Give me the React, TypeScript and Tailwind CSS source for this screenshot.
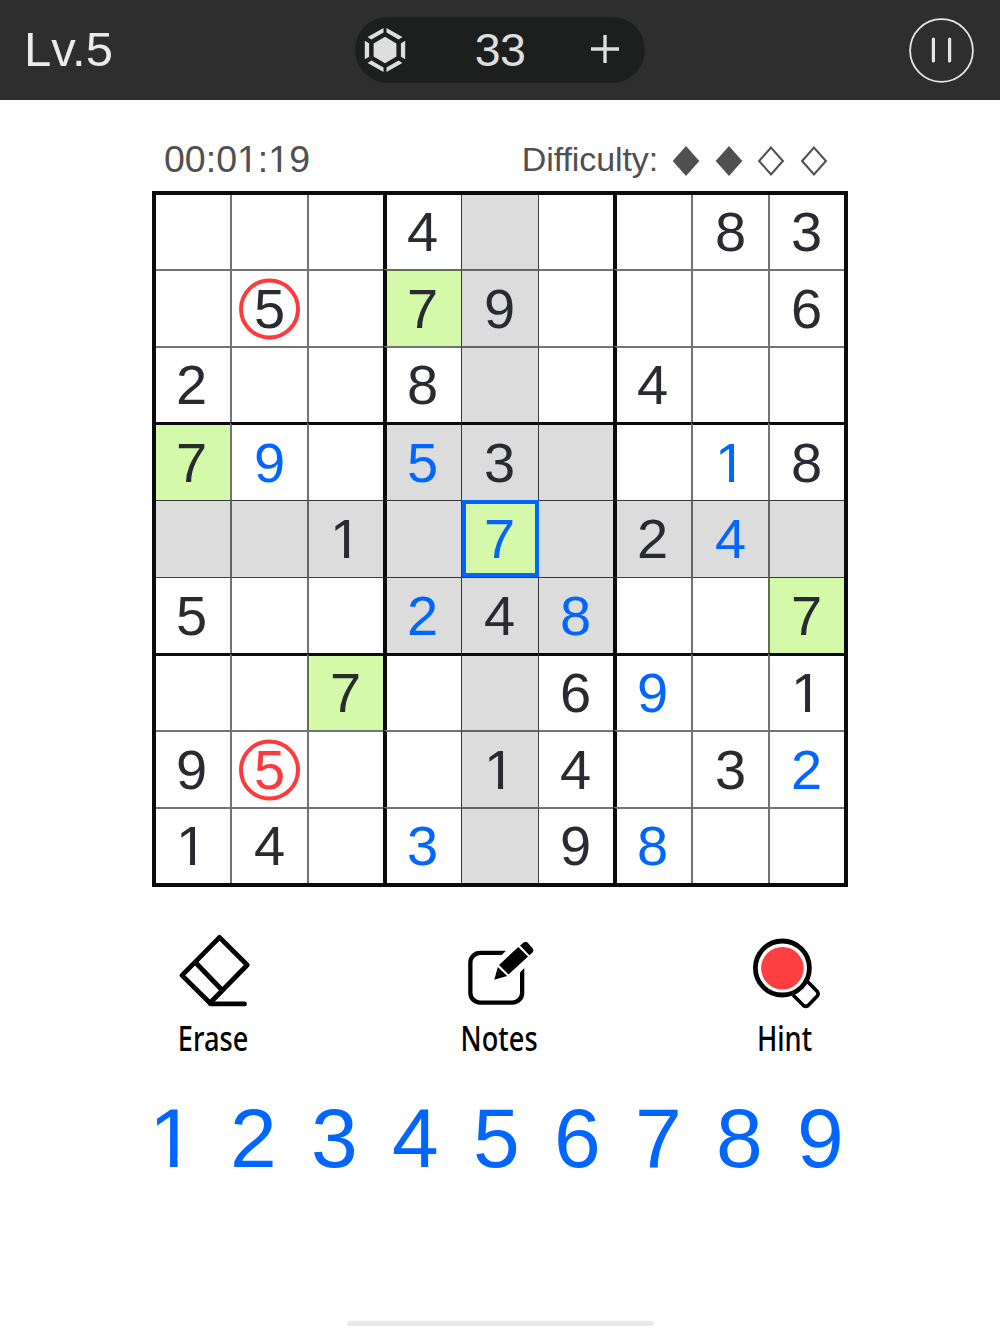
import { Fragment, type ReactNode } from "react";

const BOARD = [
  "...4...83",
  ".5.79...6",
  "2..8..4..",
  "79.53..18",
  "..1.7.24.",
  "5..248..7",
  "..7..69.1",
  "95..14.32",
  "14.3.98..",
];

// b = entered by the player, r = conflicting entry
const INK = [
  ".........",
  ".........",
  ".........",
  ".b.b...b.",
  "....b..b.",
  "...b.b...",
  "......b..",
  ".r......b",
  "...b..b..",
];

const CIRCLED = ["1-1", "7-1"];
const SELECTED = { row: 4, col: 4 };

const LEFT_LINE = [
  "border-l-0",
  "border-l-2 border-l-black/55",
  "border-l-2 border-l-black/55",
  "border-l-4 border-l-[#0b0b0d]",
  "border-l border-l-black/75",
  "border-l border-l-black/75",
  "border-l-4 border-l-[#0b0b0d]",
  "border-l-2 border-l-black/55",
  "border-l-2 border-l-black/55",
];

const TOP_LINE = [
  "border-t-0",
  "border-t-2 border-t-black/55",
  "border-t-2 border-t-black/55",
  "border-t-[3px] border-t-[#0b0b0d]",
  "border-t border-t-black/75",
  "border-t border-t-black/75",
  "border-t-[3px] border-t-[#0b0b0d]",
  "border-t-2 border-t-black/55",
  "border-t-2 border-t-black/55",
];

// Digits, with the foot of the "1" trimmed to a plain stem
function Digits({ text }: { text: string }) {
  return (
    <>
      {text.split("").map((ch, i) =>
        ch === "1" ? (
          <span
            key={i}
            className="inline-block leading-none [clip-path:polygon(0_0,100%_0,100%_0.735em,0.341em_0.735em,0.341em_1em,0.25em_1em,0.25em_0.735em,0_0.735em)]"
          >
            1
          </span>
        ) : (
          <Fragment key={i}>{ch}</Fragment>
        )
      )}
    </>
  );
}

function Cell({ row, col }: { row: number; col: number }) {
  const value = BOARD[row][col];
  const ink = INK[row][col];
  const selected = row === SELECTED.row && col === SELECTED.col;
  const related =
    row === SELECTED.row ||
    col === SELECTED.col ||
    (Math.floor(row / 3) === 1 && Math.floor(col / 3) === 1);
  const fill = value === "7" ? "bg-[#d3f9a9]" : related ? "bg-[#dcdcdc]" : "bg-white";
  const color = ink === "b" ? "text-[#0066ff]" : ink === "r" ? "text-[#fd3a3c]" : "text-[#2a2b31]";
  // an even or odd digit box keeps the glyph on whole pixels
  const box = col === 1 || col === 7 ? "w-[31px]" : "w-8";
  return (
    <div className={`relative flex items-center justify-center ${LEFT_LINE[col]} ${TOP_LINE[row]} ${col % 3 === 0 ? "pr-0.5" : ""} ${fill}`}>
      {CIRCLED.includes(`${row}-${col}`) && (
        <span className="absolute top-1/2 left-1/2 size-[61px] -translate-x-[31px] -translate-y-1/2 rounded-full border-4 border-[#fd3a3c]" />
      )}
      {selected && <span className="absolute -top-px -right-px bottom-0 left-0 z-10 border-4 border-[#0066ff]" />}
      {value !== "." && (
        <span className={`relative text-left text-[56px] leading-none ${box} ${color}`}>
          <Digits text={value} />
        </span>
      )}
    </div>
  );
}

function Gem() {
  return (
    <svg width="42" height="46" viewBox="0 0 42 46" fill="#dedede">
      <path d="M21 9.8 32.4 16.4V29.6L21 36.2 9.6 29.6V16.4Z" />
      <path d="M19.5 1V5.6L7.4 12.4 3.6 10Z" />
      <path d="M22.5 1V5.6L34.6 12.4 38.4 10Z" />
      <path d="M.8 13.8 5.1 16.3V29.7L.8 32.2Z" />
      <path d="M41.2 13.8 36.9 16.3V29.7L41.2 32.2Z" />
      <path d="M19.5 45V40.4L7.4 33.6 3.6 36Z" />
      <path d="M22.5 45V40.4L34.6 33.6 38.4 36Z" />
    </svg>
  );
}

function Diamond({ filled }: { filled: boolean }) {
  return (
    <svg width="28" height="32" viewBox="0 0 28 32">
      {filled ? (
        <path d="M14 1 27.3 16 14 31 .7 16Z" fill="#505050" />
      ) : (
        <path d="M14 2.6 25.9 16 14 29.4 2.1 16Z" fill="none" stroke="#505050" strokeWidth="2.1" />
      )}
    </svg>
  );
}

function EraserIcon() {
  return (
    <svg width="80" height="80" viewBox="0 0 80 80" fill="none" stroke="#000" strokeWidth="4.8" strokeLinejoin="round" strokeLinecap="round">
      <path d="M46.5 5.4 74.2 33 37 71 9 43.4Z" />
      <path d="M22.5 30.5 48.5 57.5" />
      <path d="M37.5 71.9H71.5" />
    </svg>
  );
}

function NotesIcon() {
  return (
    <svg width="80" height="80" viewBox="0 0 80 80">
      <path d="M46.8 18.8H21A11.8 11.8 0 0 0 9.2 30.6V61A11.8 11.8 0 0 0 21 72.8H53.5A11.8 11.8 0 0 0 65.3 61V36L61 40.4V60.8A7.8 7.8 0 0 1 53.5 68.4H21A7.8 7.8 0 0 1 13.5 60.8V30.6A7.8 7.8 0 0 1 21 23H42.8Z" />
      <path d="M59.3 15 69 24.6 49.5 42.6 40 33Z" />
      <path d="M38.8 35 48.2 43.9 35.3 47.7Z" />
      <path d="M61 13.6 64.7 10.4Q66.7 8.9 68.5 10.6L73.8 16.4Q75.4 18.3 73.6 20.2L70.4 23.3Z" />
    </svg>
  );
}

function HintIcon() {
  return (
    <svg width="80" height="80" viewBox="0 0 80 80">
      <path d="M48 63 58.5 73.5Q60.9 75.3 63.1 73.5L72.3 64Q74 61.8 72.3 59.5L62.5 49.5" fill="#fff" stroke="#000" strokeWidth="3.6" />
      <circle cx="37.4" cy="36" r="27" fill="#fff" stroke="#000" strokeWidth="4.8" />
      <circle cx="37.4" cy="36.2" r="21.3" fill="#fd3f40" />
    </svg>
  );
}

function Tool({ icon, label }: { icon: ReactNode; label: string }) {
  return (
    <button className="flex w-20 flex-col items-center">
      {icon}
      <span className="mt-[6px] origin-center scale-x-[0.8] font-['Noto_Sans',sans-serif] text-[34px] leading-[40px] font-medium text-black">
        {label}
      </span>
    </button>
  );
}

export default function App() {
  return (
    <div className="flex h-[1334px] w-[1000px] flex-col overflow-hidden bg-white font-['Liberation_Sans',Arial,sans-serif]">
      <header className="grid h-[100px] shrink-0 grid-cols-[1fr_290px_1fr] items-center bg-[#2e2e2e] text-[#ebebeb]">
        <div className="pb-0.5 pl-[24px] text-[49px] leading-none">Lv.5</div>
        <div className="flex h-[66px] items-center rounded-full bg-[#1d1e1e] pr-[26px] pl-[9px] text-[#dedede]">
          <Gem />
          <span className="flex-1 pl-[3px] text-center text-[46.5px] leading-none tracking-[-0.5px]">33</span>
          <svg width="28" height="28" viewBox="0 0 28 28" className="-mt-0.5" stroke="#dedede" strokeWidth="3.4">
            <path d="M0 14H28M14 0V28" />
          </svg>
        </div>
        <button className="mr-[26px] flex size-[65px] items-center justify-center justify-self-end">
          <svg width="65" height="65" viewBox="0 0 65 65" fill="none" stroke="#e6e6e6">
            <circle cx="32.5" cy="32.5" r="31.4" strokeWidth="1.8" />
            <path d="M24.4 21V43M40.6 21V43" strokeWidth="3.2" strokeLinecap="round" />
          </svg>
        </button>
      </header>

      <main className="mx-auto flex w-[696px] flex-1 flex-col">
        <div className="flex h-[91px] items-end justify-between pr-[20.5px] pb-3 pl-3 text-[#505050]">
          <time className="text-[37.5px] leading-[40px]">
            <Digits text="00:01:19" />
          </time>
          <div className="flex items-center text-[34px] leading-[40px]">
            <span className="mr-[14px] tracking-[-0.1px]">Difficulty:</span>
            <div className="flex gap-[14.5px] pt-1">
              <Diamond filled />
              <Diamond filled />
              <Diamond filled={false} />
              <Diamond filled={false} />
            </div>
          </div>
        </div>

        <div className="grid size-[696px] shrink-0 grid-cols-[74px_77px_76px_78px_77px_75px_78px_77px_76px] grid-rows-[74px_77px_76px_78px_77px_76px_77px_77px_76px] border-4 border-[#0b0b0d]">
          {BOARD.map((line, row) =>
            line.split("").map((_, col) => <Cell key={`${row}-${col}`} row={row} col={col} />)
          )}
        </div>

        <div className="mt-[45px] flex justify-between pr-[23.5px] pl-[21px]">
          <Tool icon={<EraserIcon />} label="Erase" />
          <Tool icon={<NotesIcon />} label="Notes" />
          <Tool icon={<HintIcon />} label="Hint" />
        </div>

        <div className="mt-[38px] -mr-[13px] -ml-[20px] grid grid-cols-9 justify-items-center text-[84px] leading-none text-[#0066ff]">
          {"123456789".split("").map((n) => (
            <button key={n} className="w-[47px] text-left leading-none">
              <Digits text={n} />
            </button>
          ))}
        </div>
      </main>

      <div className="mx-auto mb-[8px] h-[5px] w-[307px] shrink-0 rounded-full bg-[#e8e8e8]" />
    </div>
  );
}
